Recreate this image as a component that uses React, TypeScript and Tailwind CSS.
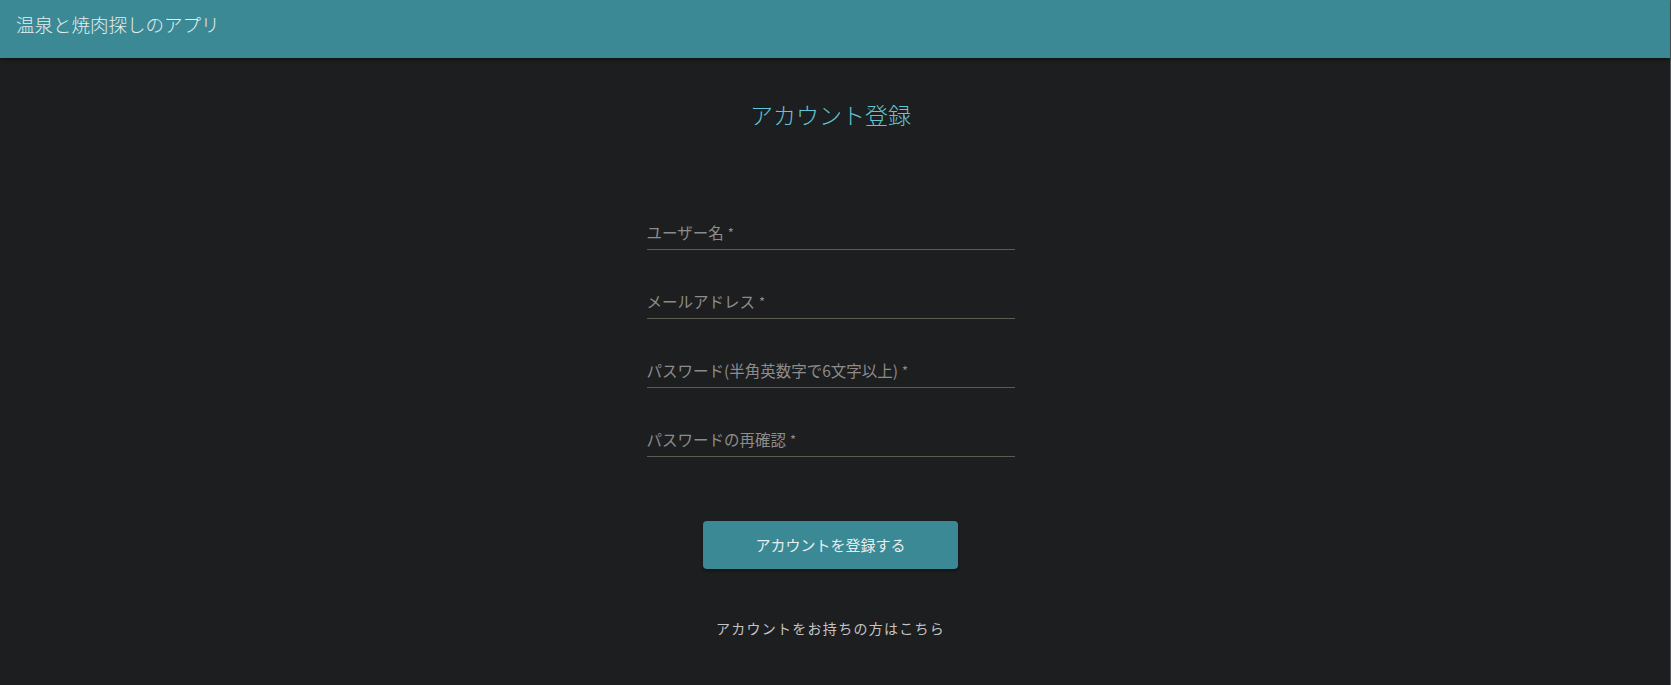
import React from 'react';

const fields = [
  'ユーザー名',
  'メールアドレス',
  'パスワード(半角英数字で6文字以上)',
  'パスワードの再確認',
];

const font = { fontFamily: '"Noto Sans CJK JP", "Noto Sans", sans-serif' };

export default function App() {
  return (
    <div className="min-h-[685px] bg-[#1d1e20] flex" style={font}>
      <div className="flex-1 flex flex-col">
        {/* App bar */}
        <header className="h-[58px] bg-[#3b8995] px-4 pt-[10px] shadow-[0_2px_4px_rgba(0,0,0,0.4)] relative z-10">
          <h1 className="h-[28px] text-[18.5px] leading-[28px] font-light text-[#e3eef0]">温泉と焼肉探しのアプリ</h1>
        </header>

        {/* Form */}
        <main className="flex flex-col items-center pr-[9px]">
          <h2 className="mt-[40px] h-[32px] text-[23px] leading-[32px] font-light text-[#63c5d4]">アカウント登録</h2>

          <form className="mt-[90px] w-[368px] flex flex-col gap-[39px]">
            {fields.map((label) => (
              <label key={label} className="block border-b border-[#5c5b52] pb-[5px]">
                <span className="flex items-center h-[24px] text-[15.5px] leading-[24px] text-[#8c8c8c]">
                  {label}
                  <span className="ml-[4px] text-[13px] leading-none">*</span>
                </span>
              </label>
            ))}
          </form>

          <button
            type="button"
            className="mt-[64px] w-[255px] h-[48px] rounded-[4px] bg-[#3b8995] text-[15px] leading-[20px] text-[#e6eef0] shadow-[0_2px_3px_rgba(0,0,0,0.35)]"
          >
            アカウントを登録する
          </button>

          <a href="#" className="mt-[49px] h-[20px] text-[14px] leading-[20px] tracking-[0.09em] text-[#c4c4c4]">
            アカウントをお持ちの方はこちら
          </a>
        </main>
      </div>
      <div className="w-px bg-[#55575a]" />
    </div>
  );
}
